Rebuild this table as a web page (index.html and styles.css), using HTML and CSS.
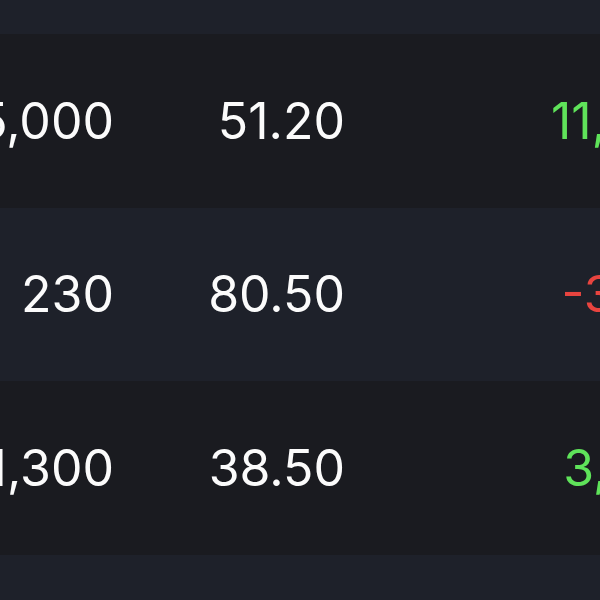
FILE: index.html
```html
<!DOCTYPE html>
<html>
<head>
<meta charset="utf-8">
<link rel="stylesheet" href="styles.css">
</head>
<body>
<div class="viewport">
  <div class="table">
    <div class="row alt"><span class="cell">1,000</span><span class="cell">12.00</span><span class="cell up">1,200.00</span></div>
    <div class="row"><span class="cell">25,000</span><span class="cell">51.20</span><span class="cell up">11,280.00</span></div>
    <div class="row alt"><span class="cell">230</span><span class="cell">80.50</span><span class="cell down">-3451.00</span></div>
    <div class="row"><span class="cell">11,300</span><span class="cell">38.50</span><span class="cell up">3,805.00</span></div>
    <div class="row alt"><span class="cell">900</span><span class="cell">22.10</span><span class="cell up">640.00</span></div>
  </div>
</div>
</body>
</html>
```
FILE: styles.css
```css
html, body {
  margin: 0;
  padding: 0;
  background: #1e212a;
}
.viewport {
  width: 600px;
  height: 600px;
  overflow: hidden;
}
.table {
  width: 900px;
  margin-top: -139.5px;
  font-family: Inter, "Noto Sans", sans-serif;
  font-size: 50px;
  color: #fbfbfb;
}
.row {
  display: grid;
  grid-template-columns: 114px 231px 429px;
  align-items: center;
  height: 173.5px;
  background: #1a1b20;
}
.row.alt {
  background: #1e212a;
}
.cell {
  text-align: right;
  white-space: nowrap;
  line-height: 1;
}
.cell:first-child {
  direction: rtl;
}
.up { color: #5fe35a; }
.down { color: #e8443f; }
```
